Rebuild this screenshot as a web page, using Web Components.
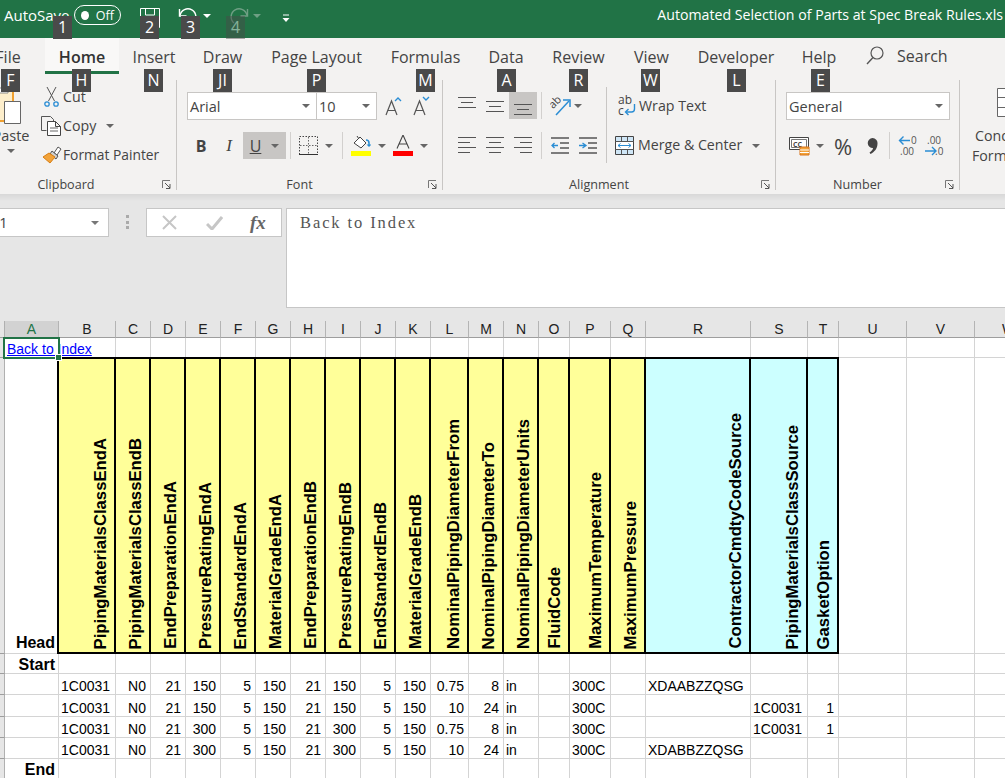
<!DOCTYPE html>
<html>
<head>
<meta charset="utf-8">
<title>Automated Selection of Parts at Spec Break Rules.xls</title>
<style>
  html, body { margin: 0; height: 100%; overflow: hidden; background: #fff; }
  body { font-family: "Open Sans", "Noto Sans", sans-serif; }
</style>
</head>
<body>
<xl-app></xl-app>
<script>
const svg = (w, h, body, extra = "") =>
  `<svg width="${w}" height="${h}" viewBox="0 0 ${w} ${h}" fill="none" style="display:block;flex:none;${extra}">${body}</svg>`;

function lines(w, h, rows, offset, step) {
  const d = rows.map(([a, b], i) => `M${a} ${offset + i * step + 0.5}H${b}`).join("");
  return svg(w, h, `<path d="${d}" stroke="#555" stroke-width="1.2"/>`);
}

const ICONS = {
  save: svg(20, 20, `<path d="M.5.5h19v19H.5z M5.500 1v6h9V1 M4.500 20v-8h11v8" stroke="#fff"/>`),
  undo: svg(20, 20, `<path d="M2 8.5A8 8 0 1 1 15 16" stroke="#fff" stroke-width="1.4"/><path d="M1.5 2v7h7" stroke="#fff" stroke-width="1.4"/>`),
  redo: svg(20, 20, `<path d="M18 8.5A8 8 0 1 0 5 16" stroke="#6f9f84" stroke-width="1.4"/><path d="M18.5 2v7h-7" stroke="#6f9f84" stroke-width="1.4"/>`),
  qat: svg(8, 9, `<path d="M1 1h6" stroke="#fff"/><path d="M.5 4h7L4 8z" fill="#fff"/>`),
  paste: svg(34, 36, `<path d="M-4 3h27v30H-4z" fill="#fdeecb" stroke="#f0a030" stroke-width="2"/><path d="M-2 0h20v5H-2z" fill="#fff" stroke="#8a8a8a"/><path d="M14.5 13.5h16v22h-16z" fill="#fff" stroke="#666"/>`),
  cut: svg(15, 20, `<path d="M3 0l7.5 14M12 0L4.5 14" stroke="#555"/><circle cx="3" cy="17" r="2.2" stroke="#2a8dd4" stroke-width="1.3"/><circle cx="12" cy="17" r="2.2" stroke="#2a8dd4" stroke-width="1.3"/>`),
  copy: svg(21, 20, `<path d="M.5 14.5V.5h9l3 3v2M.5 14.5h5" stroke="#555"/><path d="M6.5 5.5h8l5 5v9h-13z M14.5 5.5v5h5" stroke="#444" fill="#fff"/><path d="M9 12h8M9 15h8" stroke="#666"/>`),
  painter: svg(20, 19, `<path d="M12 8l4-6 3 2-4 6z" stroke="#555" fill="#fff"/><path d="M10 6l6 5-2 3-6-5z" fill="#d0d0d0" stroke="#555"/><path d="M7 8L1 12l7 6 5-6z" fill="#f2a33a" stroke="#d77e12"/>`),
  grow: svg(18, 20, `<path d="M1 19L6.5 5 12 19M3 14.5h7" stroke="#555" stroke-width="1.2"/><path d="M10 5l3-3 3 3" stroke="#2a8dd4" stroke-width="1.4"/>`),
  shrink: svg(18, 20, `<path d="M1 19L6.5 5 12 19M3 14.5h7" stroke="#555" stroke-width="1.2"/><path d="M10 1l3 3 3-3" stroke="#2a8dd4" stroke-width="1.4"/>`),
  borders: svg(19, 19, `<path d="M.5.5h18v18H.5z" stroke="#444" stroke-dasharray="1.5 1.5"/><path d="M9.5 1v17M1 9.5h17" stroke="#666" stroke-dasharray="1.5 1.5"/><path d="M0 18.5h19" stroke="#333"/>`),
  fill: svg(20, 21, `<path d="M3 8l6-6 6 6-5 5z" fill="#fff" stroke="#444"/><path d="M6 1l2 3" stroke="#444"/><path d="M15 5a3 3 0 0 1 3 3v3" stroke="#2a8dd4" stroke-width="1.5"/><path d="M15.5 9.5h5L18 12z" fill="#2a8dd4"/><path d="M0 16h20v5H0z" fill="#ff0"/>`),
  color: svg(20, 21, `<path d="M4 13.5L10 0l6 13.5M6 9h8" stroke="#444" stroke-width="1.1"/><path d="M0 16h20v5H0z" fill="#f00"/>`),
  alignT: lines(18, 11, [[0, 18], [3, 15], [0, 18]], 0, 5),
  alignL: lines(18, 17, [[0, 18], [0, 12], [0, 18], [0, 12]], 0, 5),
  alignC: lines(18, 17, [[0, 18], [3, 15], [0, 18], [3, 15]], 0, 5),
  alignR: lines(18, 17, [[0, 18], [6, 18], [0, 18], [6, 18]], 0, 5),
  orient: svg(21, 21, `<path d="M6 20L19 6" stroke="#2a8dd4" stroke-width="1.5"/><path d="M13 5h7v7" stroke="#2a8dd4" stroke-width="1.5"/><text x="-1" y="11" transform="rotate(-45 5 8)" font-family="Open Sans" font-size="11" fill="#444">ab</text>`),
  wrap: svg(18, 22, `<text x="0" y="9" font-family="Open Sans" font-size="12" fill="#444">ab</text><text x="0" y="20" font-family="Open Sans" font-size="12" fill="#444">c</text><path d="M16.5 9v5a3 3 0 0 1-3 3H8" stroke="#2a8dd4" stroke-width="1.4"/><path d="M10.5 14l-3 3 3 3" stroke="#2a8dd4" stroke-width="1.4"/>`),
  outdent: svg(19, 17, `<path d="M0 1h18M9 6h9M9 11h9M0 16h18" stroke="#555" stroke-width="1.3"/><path d="M7 8.5H1M3.5 6L1 8.5 3.5 11" stroke="#2a8dd4" stroke-width="1.3"/>`),
  indent: svg(19, 17, `<path d="M0 1h18M9 6h9M9 11h9M0 16h18" stroke="#555" stroke-width="1.3"/><path d="M0 8.5h6M3.5 6L7 8.5 3.5 11" stroke="#2a8dd4" stroke-width="1.3"/>`),
  merge: svg(19, 19, `<path d="M.5.5h18v18H.5z" stroke="#444" fill="#fff"/><path d="M1 1h17v4H1zM1 14h17v4H1z" fill="#cfe6f6"/><path d="M0 5.5h19M0 13.5h19M6.5 1v4M12.5 1v4M6.5 14v4M12.5 14v4" stroke="#555"/><path d="M3 9.5h13M5.5 7.5l-2.5 2 2.5 2M13.5 7.5l2.5 2-2.5 2" stroke="#2a8dd4"/>`),
  account: svg(21, 20, `<path d="M.5 1.5h19v12H.5z" stroke="#444" fill="#fff"/><path d="M2.5 3.5h15v8h-15z" stroke="#777"/><text x="4" y="10.5" font-family="Open Sans" font-size="7" font-weight="700" fill="#444">CC</text><path d="M11 11h9v8h-9z" fill="#f2a33a" stroke="#d9741b"/><path d="M11 14h9M11 16.5h9" stroke="#fff"/>`),
  comma: svg(11, 16, `<path d="M5.5 0a5 5 0 0 1 5 5.500c0 5-3 8.500-7 10.500l-1-1.500c2-1.500 3.500-3 3.500-4.500a5 5 0 1 1-.5-10z" fill="#444"/>`),
  incDec: svg(20, 21, `<path d="M12 5.5H2M5.5 1.5l-4 4 4 4" stroke="#2a8dd4" stroke-width="1.4"/><text x="13" y="9" font-family="Open Sans" font-size="10" fill="#555">0</text><text x="2" y="20" font-family="Open Sans" font-size="10" fill="#555">.00</text>`),
  decDec: svg(20, 21, `<text x="2" y="9" font-family="Open Sans" font-size="10" fill="#555">.00</text><path d="M0 16h10M7 12l4 4-4 4" stroke="#2a8dd4" stroke-width="1.4"/><text x="10" y="20" font-family="Open Sans" font-size="10" fill="#555">.0</text>`),
  cond: svg(20, 29, `<path d="M.5.5h19v28H.5z" stroke="#666" fill="#fff"/><path d="M.5 9.5h19M.5 19.5h19M10 .5v28" stroke="#666"/><path d="M10.5 1h9v8h-9zM10.5 20h9v8h-9z" fill="#fff" stroke="#e22"/><path d="M10.5 10h9v9h-9z" fill="#2a8dd4"/>`),
  launcher: svg(9, 9, `<path d="M.5 8V.5H8" stroke="#777"/><path d="M3 3l5 5M8 4v4.5H4" stroke="#555"/>`),
  search: svg(18, 20, `<circle cx="11" cy="7" r="6" stroke="#555" stroke-width="1.2"/><path d="M7 11.5L1 18" stroke="#555" stroke-width="1.4"/>`),
  x: svg(15, 15, `<path d="M1 1l13 13M14 1L1 14" stroke="#c6c6c6" stroke-width="2"/>`),
  check: svg(17, 14, `<path d="M1 8l5 5L16 1" stroke="#c6c6c6" stroke-width="3"/>`),
};

const arrow = (color = "#666") => `<i style="display:block;width:0;height:0;flex:none;border:4px solid transparent;border-top-color:${color};border-bottom:0"></i>`;

function mount(el, html) {
  el.attachShadow({ mode: "open" }).innerHTML = html;
}

class KeyTip extends HTMLElement {
  connectedCallback() {
    if (this.shadowRoot) return;
    mount(this, `
      <style>
        :host {
          position: absolute;
          height: 23px;
          min-width: 19px;
          padding: 0 1px;
          box-sizing: border-box;
          background: #4a4a4a;
          color: #fff;
          font: 16px/23px "Open Sans", sans-serif;
          text-align: center;
        }
        :host([faded]) { opacity: .45; }
      </style>
      <slot></slot>`);
  }
}

class TitleBar extends HTMLElement {
  constructor() {
    super();
    mount(this, `
      <style>
        :host {
          display: flex;
          align-items: center;
          height: 38px;
          background: #217346;
          color: #fff;
          font: 15px "Open Sans", sans-serif;
          white-space: nowrap;
        }
        .auto { margin: -8px 0 0 4px; width: 70px; }
        .toggle {
          display: flex;
          align-items: center;
          box-sizing: border-box;
          width: 47px;
          height: 20px;
          margin-top: -8px;
          padding: 0 6px;
          border: 1px solid #fff;
          border-radius: 10px;
          font-size: 12.5px;
        }
        .toggle b { width: 9px; height: 9px; border-radius: 50%; background: #fff; margin-right: 7px; }
        .qat { display: flex; align-items: center; margin-top: -2px; }
        .title { margin: -9px 2px 0 auto; font-size: 14.15px; }
      </style>
      <span class="auto">AutoSave</span>
      <span class="toggle"><b></b>Off</span>
      <span class="qat" style="margin-left:19px">${ICONS.save}</span>
      <span class="qat" style="margin-left:18px;margin-top:-4px">${ICONS.undo}<span style="margin:-2px 0 0 5px">${arrow("#fff")}</span></span>
      <span class="qat" style="margin-left:18px;margin-top:-4px">${ICONS.redo}<span style="margin:-2px 0 0 4px">${arrow("#6f9f84")}</span></span>
      <span class="qat" style="margin-left:21px;margin-top:-2px">${ICONS.qat}</span>
      <span class="title">Automated Selection of Parts at Spec Break Rules.xls</span>`);
  }
}

class TabStrip extends HTMLElement {
  constructor() {
    super();
    const tabs = [["File", 74], ["Home", 74], ["Insert", 70], ["Draw", 67], ["Page Layout", 121], ["Formulas", 97], ["Data", 64], ["Review", 81], ["View", 65], ["Developer", 104], ["Help", 62]];
    mount(this, `
      <style>
        :host {
          display: flex;
          height: 37px;
          margin-left: -29px;
          color: #444;
          font: 16px/38px "Open Sans", sans-serif;
          white-space: nowrap;
        }
        .tab { text-align: center; box-sizing: border-box; flex: none; }
        .on {
          height: 36px;
          background: #f9f8f7;
          border-bottom: 3px solid #217346;
          font-weight: 600;
          color: #333;
        }
        .search { display: flex; align-items: center; gap: 13px; margin: -2px 0 0 16px; font-size: 16px; }
      </style>
      ${tabs.map(([t, w]) => `<span class="tab ${t === "Home" ? "on" : ""}" style="width:${w}px">${t}</span>`).join("")}
      <span class="search">${ICONS.search}<span>Search</span></span>`);
  }
}

class RibbonGroup extends HTMLElement {
  static get observedAttributes() {
    return ["label"];
  }

  constructor() {
    super();
    mount(this, `
      <style>
        :host {
          display: flex;
          flex-direction: column;
          flex: none;
          box-sizing: border-box;
          height: 110px;
          padding-top: 12px;
          border-right: 1px solid #c8c6c4;
        }
        .body { flex: 1; min-height: 0; }
        .foot {
          display: grid;
          grid-template-columns: 1fr auto 1fr;
          align-items: center;
          height: 20px;
          margin-bottom: -4px;
          padding-right: 20px;
          font-size: 12.6px;
          color: #444;
        }
        .launch { grid-column: 3; justify-self: end; margin-right: -15px; }
      </style>
      <div class="body"><slot></slot></div>
      <div class="foot"><span></span><span class="label"></span><span class="launch">${ICONS.launcher}</span></div>`);
  }

  attributeChangedCallback(name, oldValue, newValue) {
    this.shadowRoot.querySelector(".label").textContent = newValue;
  }
}

class Ribbon extends HTMLElement {
  constructor() {
    super();
    mount(this, `
      <style>
        :host {
          display: block;
          height: 156px;
          overflow: hidden;
          background: #f3f2f1;
          color: #444;
          font: 14.2px "Open Sans", sans-serif;
          white-space: nowrap;
        }
        .groups { display: flex; padding-top: 5px; margin-left: -24px; }
        .row { display: flex; align-items: center; height: 27px; }
        .row + .row { margin-top: 13px; }
        .t { display: flex; align-items: center; justify-content: center; flex: none; height: 27px; }
        .on { background: #c8c6c4; }
        .sep { flex: none; width: 1px; height: 27px; background: #d2d0ce; }
        .combo {
          display: flex;
          align-items: center;
          justify-content: space-between;
          box-sizing: border-box;
          flex: none;
          height: 28px;
          padding: 1px 6px 0 2px;
          background: #fff;
          border: 1px solid #c8c6c4;
          font: 14.5px "Open Sans", sans-serif;
          color: #444;
        }
        .clip { display: flex; height: 78px; }
        .paste { width: 64px; margin: -4px 0 0 4px; display: flex; flex-direction: column; align-items: center; font-size: 14.5px; }
        .paste svg { margin: 0 10px 0 0; overflow: visible; }
        .paste span { margin: 1px 0 0 -2px; height: 22px; line-height: 22px; }
        .paste .a { margin: 2px 0 0 -2px; height: auto; }
        .small { margin: -10px 0 0 -4px; }
        .small .t { height: 29px; justify-content: flex-start; }
        .small .ico { width: 23px; display: flex; justify-content: center; }
        .split { display: flex; height: 76px; margin-top: -5px; }
        .split > div { padding-top: 5px; }
        .tall { flex: none; width: 1px; height: 76px; background: #c8c6c4; }
        .cond { display: flex; flex-direction: column; margin: 8px 0 0 12px; line-height: 20px; }
        .cond svg { margin: 0 0 9px 25px; }
      </style>
      <ribbon-tabs></ribbon-tabs>
      <div class="groups">
        <ribbon-group label="Clipboard" style="width:201px">
          <div class="clip">
            <div class="paste">${ICONS.paste}<span>Paste</span><span class="a">${arrow()}</span></div>
            <div class="small">
              <div class="t"><span class="ico">${ICONS.cut}</span><span>Cut</span></div>
              <div class="t"><span class="ico">${ICONS.copy}</span><span>Copy</span><span style="margin-left:10px">${arrow()}</span></div>
              <div class="t"><span class="ico">${ICONS.painter}</span><span style="font-size:13.8px">Format Painter</span></div>
            </div>
          </div>
        </ribbon-group>
        <ribbon-group label="Font" style="width:266px">
          <div class="row" style="margin-left:10px">
            <span class="combo" style="width:130px">Arial${arrow()}</span>
            <span class="combo" style="width:60px;border-left:0">10${arrow()}</span>
            <span class="t" style="width:18px;margin-left:8px">${ICONS.grow}</span>
            <span class="t" style="width:18px;margin-left:10px">${ICONS.shrink}</span>
          </div>
          <div class="row" style="margin-left:10px">
            <span class="t" style="width:28px;font:700 16px 'Open Sans'">B</span>
            <span class="t" style="width:28px;font:italic 17px 'Liberation Serif'">I</span>
            <span class="t on" style="width:43px;gap:10px;font-size:16px"><span style="text-decoration:underline">U</span>${arrow()}</span>
            <span class="sep" style="margin-left:4px"></span>
            <span class="t" style="margin-left:8px;width:19px">${ICONS.borders}</span>
            <span class="t" style="margin-left:7px">${arrow()}</span>
            <span class="sep" style="margin-left:9px"></span>
            <span class="t" style="margin-left:8px;width:20px">${ICONS.fill}</span>
            <span class="t" style="margin-left:7px">${arrow()}</span>
            <span class="t" style="margin-left:7px;width:20px">${ICONS.color}</span>
            <span class="t" style="margin-left:7px">${arrow()}</span>
          </div>
        </ribbon-group>
        <ribbon-group label="Alignment" style="width:333px">
          <div class="split">
            <div style="width:163px;padding-left:15px;box-sizing:border-box">
              <div class="row">
                <span class="t" style="width:18px;margin-top:-6px">${ICONS.alignT}</span>
                <span class="t" style="width:18px;margin:0 0 -1px 10px">${ICONS.alignT}</span>
                <span class="t on" style="width:28px;margin-left:5px"><span style="margin-top:8px">${ICONS.alignT}</span></span>
                <span class="sep" style="margin-left:4px"></span>
                <span class="t" style="margin-left:8px;width:21px">${ICONS.orient}</span>
                <span class="t" style="margin-left:3px">${arrow()}</span>
              </div>
              <div class="row">
                <span class="t" style="width:18px">${ICONS.alignL}</span>
                <span class="t" style="width:18px;margin-left:10px">${ICONS.alignC}</span>
                <span class="t" style="width:18px;margin-left:10px">${ICONS.alignR}</span>
                <span class="sep" style="margin-left:9px"></span>
                <span class="t" style="margin-left:9px;width:19px">${ICONS.outdent}</span>
                <span class="t" style="margin-left:9px;width:19px">${ICONS.indent}</span>
              </div>
            </div>
            <span class="tall"></span>
            <div style="padding-left:8px">
              <div class="row">
                <span class="t" style="margin-left:3px;width:18px">${ICONS.wrap}</span>
                <span class="t" style="margin:-1px 0 0 3px">Wrap Text</span>
              </div>
              <div class="row">
                <span class="t" style="width:19px">${ICONS.merge}</span>
                <span class="t" style="margin:-2px 0 0 4px">Merge &amp; Center</span>
                <span class="t" style="margin-left:10px">${arrow()}</span>
              </div>
            </div>
          </div>
        </ribbon-group>
        <ribbon-group label="Number" style="width:184px">
          <div class="row" style="margin-left:10px">
            <span class="combo" style="width:164px">General${arrow()}</span>
          </div>
          <div class="row" style="margin-left:13px">
            <span class="t" style="width:21px">${ICONS.account}</span>
            <span class="t" style="margin-left:6px">${arrow()}</span>
            <span class="t" style="margin-left:8px;width:22px;font-size:22px">%</span>
            <span class="t" style="margin-left:13px;width:11px">${ICONS.comma}</span>
            <span class="sep" style="margin-left:11px"></span>
            <span class="t" style="margin-left:8px;width:20px">${ICONS.incDec}</span>
            <span class="t" style="margin-left:7px;width:20px">${ICONS.decDec}</span>
          </div>
        </ribbon-group>
        <div class="cond">${ICONS.cond}<span style="margin-left:3px">Cond</span><span>Form</span></div>
      </div>`);
  }
}

class FormulaBar extends HTMLElement {
  constructor() {
    super();
    mount(this, `
      <style>
        :host {
          display: flex;
          align-items: flex-start;
          box-sizing: border-box;
          height: 127px;
          padding-top: 14px;
          background: linear-gradient(#d8d8d8, #e6e6e6 7px);
          color: #444;
        }
        .name, .btns, .text { box-sizing: border-box; background: #fff; border: 1px solid #c6c6c6; }
        .name {
          display: flex;
          align-items: center;
          justify-content: space-between;
          width: 129px;
          height: 29px;
          margin-left: -20px;
          padding: 0 9px;
          font: 14.5px "Open Sans", sans-serif;
        }
        .dots { width: 3px; height: 14px; margin: 7px 17px 0; background: repeating-linear-gradient(#aaa 0 3px, transparent 3px 5.5px); flex: none; }
        .btns { display: flex; align-items: center; width: 136px; height: 29px; padding-left: 15px; }
        .fx { font: italic 700 19px "Liberation Serif", serif; color: #666; margin-left: 27px; }
        .text {
          flex: 1;
          height: 100px;
          margin: 0 -2px 0 4px;
          padding: 4px 13px;
          font: 16.5px/20px "Liberation Serif", serif;
          letter-spacing: 1.9px;
          color: #555;
        }
      </style>
      <div class="name"><span>A1</span>${arrow("#777")}</div>
      <div class="dots"></div>
      <div class="btns">${ICONS.x}<span style="margin-left:29px">${ICONS.check}</span><span class="fx">fx</span></div>
      <div class="text">Back to Index</div>`);
  }
}

const COLS = [
  ["A", 54], ["B", 57], ["C", 35], ["D", 35], ["E", 35], ["F", 35], ["G", 35], ["H", 35], ["I", 35], ["J", 35], ["K", 35],
  ["L", 38], ["M", 35], ["N", 35], ["O", 31], ["P", 41], ["Q", 35], ["R", 105], ["S", 57], ["T", 31], ["U", 68], ["V", 68], ["W", 68],
];
const HEADERS = [
  "PipingMaterialsClassEndA", "PipingMaterialsClassEndB", "EndPreparationEndA", "PressureRatingEndA", "EndStandardEndA",
  "MaterialGradeEndA", "EndPreparationEndB", "PressureRatingEndB", "EndStandardEndB", "MaterialGradeEndB",
  "NominalPipingDiameterFrom", "NominalPipingDiameterTo", "NominalPipingDiameterUnits", "FluidCode", "MaximumTemperature",
  "MaximumPressure", "ContractorCmdtyCodeSource", "PipingMaterialsClassSource", "GasketOption",
];
// left aligned columns, the rest is right aligned like numbers in excel
const LEFT = new Set(["B", "N", "P", "R", "S"]);
const ROWS = [
  ["1C0031", "N0", "21", "150", "5", "150", "21", "150", "5", "150", "0.75", "8", "in", "", "300C", "", "XDAABZZQSG", "", ""],
  ["1C0031", "N0", "21", "150", "5", "150", "21", "150", "5", "150", "10", "24", "in", "", "300C", "", "", "1C0031", "1"],
  ["1C0031", "N0", "21", "300", "5", "150", "21", "300", "5", "150", "0.75", "8", "in", "", "300C", "", "", "1C0031", "1"],
  ["1C0031", "N0", "21", "300", "5", "150", "21", "300", "5", "150", "10", "24", "in", "", "300C", "", "XDABBZZQSG", "", ""],
];

class Sheet extends HTMLElement {
  constructor() {
    super();
    const cell = (cls, text = "") => `<div class="c ${cls}">${text}</div>`;
    const rowHead = cell("rh");
    const blanks = (n) => cell("").repeat(n);

    let html = `<div class="corner"></div>`;
    COLS.forEach(([name], i) => { html += `<div class="ch ${i === 0 ? "active" : ""}">${name}</div>`; });

    // row 1 with the link, it runs over into column B
    html += rowHead + `<div class="c link"><a>Back to Index</a></div>` + blanks(COLS.length - 1);

    // rotated header row
    html += rowHead + cell("label head", "Head");
    HEADERS.forEach((text, i) => {
      html += `<div class="hd ${i >= 16 ? "cyan" : ""} ${i === 0 ? "first" : ""}"><span>${text}</span></div>`;
    });
    html += blanks(3);

    html += rowHead + cell("label", "Start") + blanks(COLS.length - 1);

    ROWS.forEach((row) => {
      html += rowHead + cell("");
      row.forEach((text, i) => {
        html += cell(LEFT.has(COLS[i + 1][0]) ? "l" : "r", text);
      });
      html += blanks(3);
    });

    html += rowHead + cell("label", "End") + blanks(COLS.length - 1);

    mount(this, `
      <style>
        :host { display: block; position: relative; height: 457px; overflow: hidden; background: #fff; }
        .grid {
          display: grid;
          grid-template-columns: 5px ${COLS.map((c) => c[1] + "px").join(" ")};
          grid-template-rows: 17px 20px 296px 20px 21px 22px 21px 21px 20px;
          font: 14px "Liberation Sans", Arial, sans-serif;
          color: #000;
        }
        .corner { background: #e6e6e6; border-right: 1px solid #b0b0b0; border-bottom: 1px solid #9e9e9e; box-sizing: border-box; }
        .ch {
          box-sizing: border-box;
          background: #e6e6e6;
          border-right: 1px solid #b4b4b4;
          border-bottom: 1px solid #9e9e9e;
          line-height: 17px;
          text-align: center;
          color: #222;
        }
        .ch.active { background: #d2d2d2; color: #217346; }
        .c {
          box-sizing: border-box;
          display: flex;
          align-items: flex-end;
          min-width: 0;
          padding: 0 4px 0 2px;
          border-right: 1px solid #d4d4d4;
          border-bottom: 1px solid #d4d4d4;
          line-height: 15px;
          white-space: nowrap;
        }
        .rh { background: #e6e6e6; border-right: 1px solid #b0b0b0; border-bottom: 1px solid #9e9e9e; padding: 0; }
        .r { justify-content: flex-end; }
        .l { justify-content: flex-start; }
        .label { justify-content: flex-end; padding-right: 3px; font: 700 16px/17px "Liberation Sans", Arial, sans-serif; }
        .label.head { line-height: 19px; padding-bottom: 1px; }
        .link { padding-left: 2px; border-right: 0; line-height: 16px; }
        .link a { color: #0000ff; text-decoration: underline; }
        .hd {
          box-sizing: border-box;
          display: flex;
          justify-content: flex-end;
          align-items: flex-end;
          min-width: 0;
          padding: 0 4px 3px 0;
          background: #ffff99;
          border: solid #000;
          border-width: 2px 2px 2px 0;
          font: 700 16.7px/19px "Liberation Sans", Arial, sans-serif;
          margin-top: -1px;
        }
        .hd span { writing-mode: vertical-rl; transform: rotate(180deg); white-space: nowrap; }
        .hd.first { border-left-width: 2px; margin-left: -2px; }
        .hd.cyan { background: #ccffff; }
        .sel {
          position: absolute;
          left: 3px;
          top: 16px;
          width: 57px;
          height: 22px;
          box-sizing: border-box;
          border: 2px solid #217346;
          pointer-events: none;
        }
        .handle { position: absolute; right: -4px; bottom: -4px; width: 5px; height: 5px; background: #217346; border: 1px solid #fff; }
      </style>
      <div class="grid">${html}</div>
      <div class="sel"><div class="handle"></div></div>`);
  }
}

class App extends HTMLElement {
  constructor() {
    super();
    const tips = [
      ["1", 53, 16], ["2", 140, 16], ["3", 181, 16], ["4", 226, 16, true],
      ["F", 1, 69], ["H", 72, 69], ["N", 144, 69], ["JI", 213, 69], ["P", 307, 69], ["M", 416, 69],
      ["A", 497, 69], ["R", 569, 69], ["W", 641, 69], ["L", 727, 69], ["E", 811, 69],
    ];
    mount(this, `
      <style>
        :host { display: block; position: relative; width: 1005px; height: 778px; overflow: hidden; }
      </style>
      <title-bar></title-bar>
      <ribbon-bar></ribbon-bar>
      <formula-bar></formula-bar>
      <sheet-grid></sheet-grid>
      ${tips.map(([t, x, y, faded]) => `<key-tip style="left:${x}px;top:${y}px" ${faded ? "faded" : ""}>${t}</key-tip>`).join("")}`);
  }
}

customElements.define("key-tip", KeyTip);
customElements.define("title-bar", TitleBar);
customElements.define("ribbon-tabs", TabStrip);
customElements.define("ribbon-group", RibbonGroup);
customElements.define("ribbon-bar", Ribbon);
customElements.define("formula-bar", FormulaBar);
customElements.define("sheet-grid", Sheet);
customElements.define("xl-app", App);
</script>
</body>
</html>
